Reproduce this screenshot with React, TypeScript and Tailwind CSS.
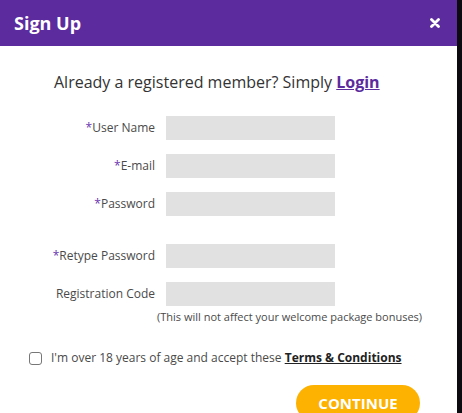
export default function App() {
  const font = { fontFamily: '"Open Sans", "Noto Sans", Arial, sans-serif' };

  const Row = ({ label, req, className = '' }: { label: string; req?: boolean; className?: string }) => (
    <div className={`flex items-center h-[24px] ${className}`}>
      <label className="w-[155px] text-right text-[12px] text-[#4a4a4a]">
        {req && <span className="text-[#6a35b0]">*</span>}
        {label}
      </label>
      <input type="text" className="ml-[11px] w-[169px] h-[24px] bg-[#e1e1e1] outline-none border-0" />
    </div>
  );

  return (
    <div className="w-[462px] h-[413px] flex bg-[#0d0a10] overflow-hidden" style={font}>
      <div className="w-[457px] h-full bg-white flex flex-col">
        <div className="h-[46px] shrink-0 bg-[#5c2b9e] flex items-center justify-between pl-[14px] pr-[17px]">
          <h1 className="text-white font-bold text-[18px] leading-none">Sign Up</h1>
          <button className="w-[10px] h-[10px]">
            <svg viewBox="0 0 10 10" className="w-[10px] h-[10px]">
              <path d="M1.5 1.5 L8.5 8.5 M8.5 1.5 L1.5 8.5" stroke="#fff" strokeWidth="2.8" strokeLinecap="round" />
            </svg>
          </button>
        </div>

        <p className="mt-[26px] h-[20px] leading-[20px] text-[16px] text-[#333] pl-[54px]">
          Already a registered member? Simply{' '}
          <a href="#" className="font-bold text-[#5c2b9e] underline">Login</a>
        </p>

        <div className="mt-[24px] flex flex-col">
          <Row label="User Name" req />
          <Row label="E-mail" req className="mt-[14px]" />
          <Row label="Password" req className="mt-[14px]" />
          <Row label="Retype Password" req className="mt-[28px]" />
          <Row label="Registration Code" className="mt-[14px]" />
          <p className="mt-[3px] ml-[157px] text-[11px] leading-[16px] text-[#4a4a4a]">
            (This will not affect your welcome package bonuses)
          </p>
        </div>

        <div className="mt-[24px] h-[20px] flex items-center pl-[29px]">
          <span className="w-[13px] h-[13px] rounded-[3px] border border-[#777] bg-white" />
          <span className="ml-[9px] text-[12px] text-[#4a4a4a]">
            I'm over 18 years of age and accept these{' '}
            <a href="#" className="font-bold text-[#222] underline">Terms &amp; Conditions</a>
          </span>
        </div>

        <div className="mt-[18px] flex justify-end pr-[37px]">
          <button className="w-[124px] h-[36px] rounded-full bg-[#fdb100] text-white font-bold text-[15px]">
            CONTINUE
          </button>
        </div>
      </div>
    </div>
  );
}
